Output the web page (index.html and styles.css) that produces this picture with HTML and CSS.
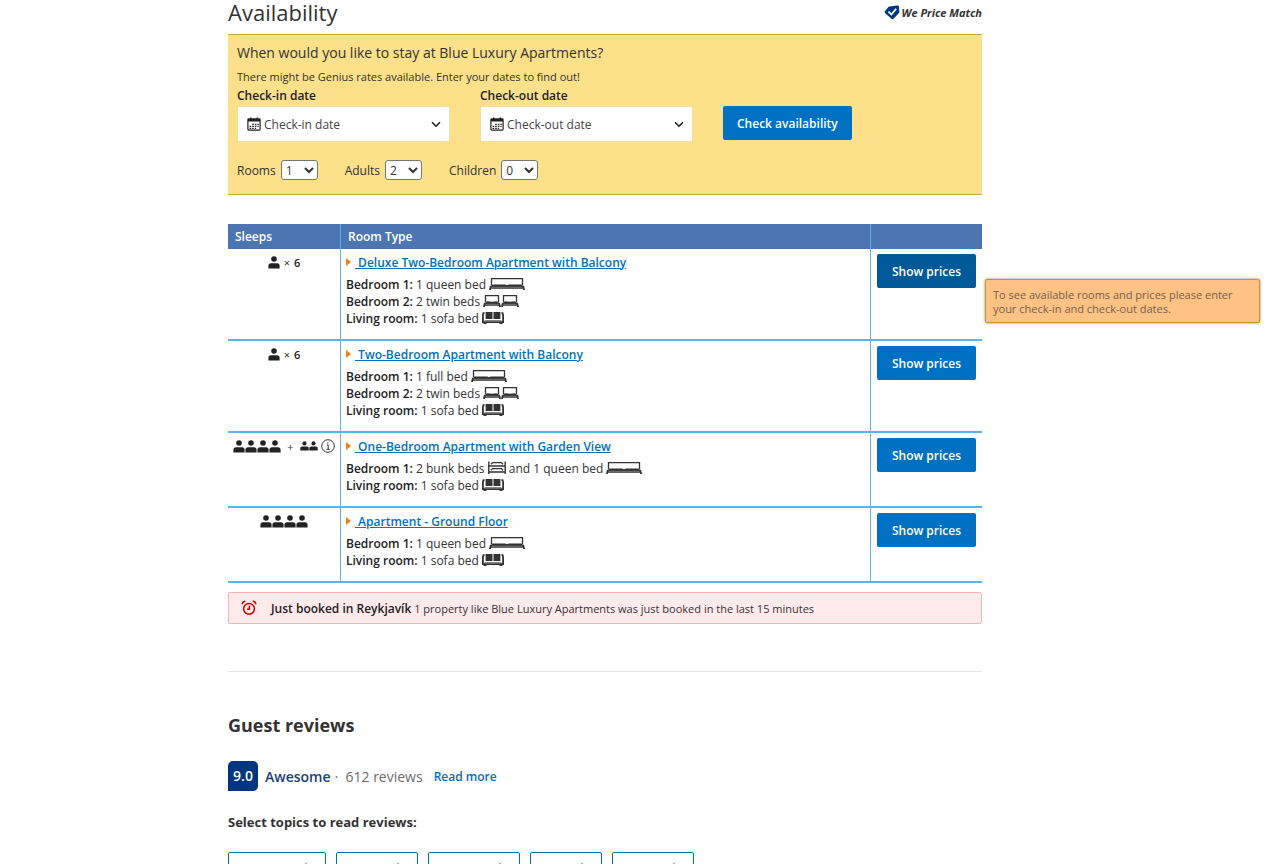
FILE: index.html
```
<!DOCTYPE html>
<html lang="en">
    <head>
        <meta charset="UTF-8" />
        <meta name="viewport" content="width=device-width, initial-scale=1.0" />
        <title>Blue Luxury Apartments - Availability</title>
        <link rel="stylesheet" href="styles.css">
    </head>
    <body>
        <!-- icon sprites -->
        <svg class="sprites" aria-hidden="true">
            <symbol id="person" viewBox="0 0 12 13">
                <circle cx="6" cy="3" r="2.8" />
                <path d="M0.4 12.6V9.8c0-1.7 1-2.6 2.6-2.6h6c1.6 0 2.6.9 2.6 2.6v2.8z" />
            </symbol>
            <symbol id="bed-large" viewBox="0 0 36 12">
                <path d="M2.5 7V0.7h31V7" fill="none" stroke="currentColor" stroke-width="1.3" />
                <path d="M2 8l1.5-1.4h12.8l1.7 0.6 1.7-0.6h12.8L34 8z" />
                <path d="M1 7.8h34l1 4.2h-2v-1.2H2V12H0z" />
                <path d="M2.5 9.3h31" stroke="#8a8a8a" stroke-width="0.8" />
            </symbol>
            <symbol id="bed-single" viewBox="0 0 18 12">
                <path d="M2.5 7V0.7h13V7" fill="none" stroke="currentColor" stroke-width="1.3" />
                <path d="M2 8l2-1.8c3 0.6 7 0.6 10 0L16 8z" />
                <path d="M1 7.8h16l1 4.2h-2v-1.2H2V12H0z" />
                <path d="M2.5 9.3h13" stroke="#8a8a8a" stroke-width="0.8" />
            </symbol>
            <symbol id="bed-sofa" viewBox="0 0 22 12">
                <path d="M3.6 0h6.9v7H3.6zM11.5 0h6.9v7h-6.9z" />
                <path d="M2.6 1.2H1.4L0.9 3v7.2h20.2V3l-0.5-1.8h-1.2" fill="none" stroke="currentColor" stroke-width="1.8" />
                <path d="M2.6 8.6h16.8" stroke="#777" stroke-width="1" />
                <path d="M1.5 10.4h3V12h-3zM17.5 10.4h3V12h-3z" />
            </symbol>
            <symbol id="bed-bunk" viewBox="0 0 18 13">
                <path d="M0.8 0.5V13M17.2 0.5V13" stroke="currentColor" stroke-width="1.4" />
                <path d="M1 5h16M1 11h16" stroke="currentColor" stroke-width="1.5" />
                <path d="M3 3.2l1.6-1.6h8.8L15 3.2M3 9.2l1.6-1.6h8.8L15 9.2" fill="none" stroke="currentColor" stroke-width="1.3" />
            </symbol>
            <symbol id="calendar" viewBox="0 0 14 14">
                <rect x="0.9" y="1.9" width="12.2" height="11.2" rx="0.8" fill="none" stroke="currentColor" stroke-width="1.2" />
                <path d="M1 2h12v2.6H1zM3 0.4h1.4V2H3zM9.6 0.4H11V2H9.6z" />
                <path d="M5.2 7.4h6.6M2.6 9.4h9M2.6 11.3h6.5" fill="none" stroke="currentColor" stroke-width="1.2" stroke-dasharray="1.6 1" />
            </symbol>
            <symbol id="chevron" viewBox="0 0 10 7">
                <path d="M1 1.2l4 4 4-4" fill="none" stroke="currentColor" stroke-width="1.6" />
            </symbol>
        </svg>

        <div class="page">
            <div class="title_row">
                <h2>Availability</h2>
                <a class="price_match" href="#">
                    <svg width="16" height="15" viewBox="0 0 16 15">
                        <path d="M5.4 1.4l8-.9c.8-.1 1.4.4 1.5 1.1l.4 5.2c0 .5-.1.8-.4 1.2l-5.4 5.8c-.6.6-1.4.6-2 0L1.2 8.2c-.7-.7-.7-1.4-.1-2.1l3.3-4.2c.3-.3.6-.5 1-.5z" fill="#003580" />
                        <path d="M4.4 6.6l3 2.8 4.8-5.6" fill="none" stroke="#fff" stroke-width="1.7" />
                    </svg>
                    We Price Match
                </a>
            </div>

            <form class="search_box">
                <p class="question">When would you like to stay at Blue Luxury Apartments?</p>
                <p class="genius">There might be Genius rates available. Enter your dates to find out!</p>
                <div class="date_row">
                    <div class="date_field">
                        <label for="checkin">Check-in date</label>
                        <button type="button" id="checkin" class="date_btn">
                            <svg width="14" height="14"><use href="#calendar" /></svg>
                            <span>Check-in date</span>
                            <svg width="10" height="7"><use href="#chevron" /></svg>
                        </button>
                    </div>
                    <div class="date_field">
                        <label for="checkout">Check-out date</label>
                        <button type="button" id="checkout" class="date_btn">
                            <svg width="14" height="14"><use href="#calendar" /></svg>
                            <span>Check-out date</span>
                            <svg width="10" height="7"><use href="#chevron" /></svg>
                        </button>
                    </div>
                    <button type="submit" class="btn">Check availability</button>
                </div>
                <div class="group_row">
                    <div>
                        <label for="rooms">Rooms</label>
                        <select id="rooms"><option>1</option></select>
                    </div>
                    <div>
                        <label for="adults">Adults</label>
                        <select id="adults"><option>2</option></select>
                    </div>
                    <div>
                        <label for="children">Children</label>
                        <select id="children"><option>0</option></select>
                    </div>
                </div>
            </form>

            <table class="rooms">
                <thead>
                    <tr>
                        <th class="col_sleeps">Sleeps</th>
                        <th>Room Type</th>
                        <th class="col_price"></th>
                    </tr>
                </thead>
                <tbody>
                    <tr>
                        <td>
                            <div class="sleeps">
                                <svg width="12" height="13"><use href="#person" /></svg>
                                <span class="times">×</span>
                                <b>6</b>
                            </div>
                        </td>
                        <td>
                            <div class="room_name"><a href="#">&nbsp;Deluxe Two-Bedroom Apartment with Balcony</a></div>
                            <ul class="beds">
                                <li><b>Bedroom 1:</b> 1 queen bed <svg width="36" height="12"><use href="#bed-large" /></svg></li>
                                <li><b>Bedroom 2:</b> 2 twin beds <svg width="18" height="12"><use href="#bed-single" /></svg><svg width="18" height="12"><use href="#bed-single" /></svg></li>
                                <li><b>Living room:</b> 1 sofa bed <svg width="22" height="12"><use href="#bed-sofa" /></svg></li>
                            </ul>
                        </td>
                        <td>
                            <div class="price_cell">
                                <button type="button" class="btn active">Show prices</button>
                                <div class="tooltip" role="tooltip">To see available rooms and prices please enter your check-in and check-out dates.</div>
                            </div>
                        </td>
                    </tr>
                    <tr>
                        <td>
                            <div class="sleeps">
                                <svg width="12" height="13"><use href="#person" /></svg>
                                <span class="times">×</span>
                                <b>6</b>
                            </div>
                        </td>
                        <td>
                            <div class="room_name"><a href="#">&nbsp;Two-Bedroom Apartment with Balcony</a></div>
                            <ul class="beds">
                                <li><b>Bedroom 1:</b> 1 full bed <svg width="36" height="12"><use href="#bed-large" /></svg></li>
                                <li><b>Bedroom 2:</b> 2 twin beds <svg width="18" height="12"><use href="#bed-single" /></svg><svg width="18" height="12"><use href="#bed-single" /></svg></li>
                                <li><b>Living room:</b> 1 sofa bed <svg width="22" height="12"><use href="#bed-sofa" /></svg></li>
                            </ul>
                        </td>
                        <td>
                            <div class="price_cell">
                                <button type="button" class="btn">Show prices</button>
                            </div>
                        </td>
                    </tr>
                    <tr>
                        <td>
                            <div class="sleeps">
                                <svg width="12" height="13"><use href="#person" /></svg>
                                <svg width="12" height="13"><use href="#person" /></svg>
                                <svg width="12" height="13"><use href="#person" /></svg>
                                <svg width="12" height="13"><use href="#person" /></svg>
                                <span class="plus">+</span>
                                <svg class="child" width="9" height="10"><use href="#person" /></svg>
                                <svg class="child" width="9" height="10"><use href="#person" /></svg>
                                <svg class="info" width="14" height="14" viewBox="0 0 14 14">
                                    <circle cx="7" cy="7" r="6.3" fill="none" stroke="currentColor" />
                                    <path d="M6 6h1.2v4.2M5.6 10.4h3M6.8 3.4v1.3" fill="none" stroke="currentColor" />
                                </svg>
                            </div>
                        </td>
                        <td>
                            <div class="room_name"><a href="#">&nbsp;One-Bedroom Apartment with Garden View</a></div>
                            <ul class="beds">
                                <li><b>Bedroom 1:</b> 2 bunk beds <svg width="18" height="13"><use href="#bed-bunk" /></svg> and 1 queen bed <svg width="36" height="12"><use href="#bed-large" /></svg></li>
                                <li><b>Living room:</b> 1 sofa bed <svg width="22" height="12"><use href="#bed-sofa" /></svg></li>
                            </ul>
                        </td>
                        <td>
                            <div class="price_cell">
                                <button type="button" class="btn">Show prices</button>
                            </div>
                        </td>
                    </tr>
                    <tr>
                        <td>
                            <div class="sleeps">
                                <svg width="12" height="13"><use href="#person" /></svg>
                                <svg width="12" height="13"><use href="#person" /></svg>
                                <svg width="12" height="13"><use href="#person" /></svg>
                                <svg width="12" height="13"><use href="#person" /></svg>
                            </div>
                        </td>
                        <td>
                            <div class="room_name"><a href="#">&nbsp;Apartment - Ground Floor</a></div>
                            <ul class="beds">
                                <li><b>Bedroom 1:</b> 1 queen bed <svg width="36" height="12"><use href="#bed-large" /></svg></li>
                                <li><b>Living room:</b> 1 sofa bed <svg width="22" height="12"><use href="#bed-sofa" /></svg></li>
                            </ul>
                        </td>
                        <td>
                            <div class="price_cell">
                                <button type="button" class="btn">Show prices</button>
                            </div>
                        </td>
                    </tr>
                </tbody>
            </table>

            <div class="just_booked">
                <svg width="16" height="16" viewBox="0 0 16 16" fill="none" stroke="#c00" stroke-width="1.5">
                    <circle cx="8" cy="8.8" r="5.4" />
                    <path d="M8.4 5.6v3.6H6M1 4.2C1.4 2.6 2.6 1.4 4.2 1M15 4.2C14.6 2.6 13.4 1.4 11.8 1" />
                </svg>
                <p><b>Just booked in Reykjavík</b> 1 property like Blue Luxury Apartments was just booked in the last 15 minutes</p>
            </div>

            <hr>

            <h3>Guest reviews</h3>
            <div class="score_row">
                <span class="score">9.0</span>
                <span class="score_word">Awesome</span>
                <span class="score_count">· &nbsp;612 reviews</span>
                <a href="#">Read more</a>
            </div>
            <h4>Select topics to read reviews:</h4>
            <div class="topics">
                <button type="button" class="topic topic_xl" aria-label="Add topic"><svg width="12" height="12" viewBox="0 0 12 12"><path d="M6 0v12M0 6h12" stroke="currentColor" /></svg></button>
                <button type="button" class="topic topic_m" aria-label="Add topic"><svg width="12" height="12" viewBox="0 0 12 12"><path d="M6 0v12M0 6h12" stroke="currentColor" /></svg></button>
                <button type="button" class="topic topic_l" aria-label="Add topic"><svg width="12" height="12" viewBox="0 0 12 12"><path d="M6 0v12M0 6h12" stroke="currentColor" /></svg></button>
                <button type="button" class="topic topic_s" aria-label="Add topic"><svg width="12" height="12" viewBox="0 0 12 12"><path d="M6 0v12M0 6h12" stroke="currentColor" /></svg></button>
                <button type="button" class="topic topic_m" aria-label="Add topic"><svg width="12" height="12" viewBox="0 0 12 12"><path d="M6 0v12M0 6h12" stroke="currentColor" /></svg></button>
            </div>
        </div>
    </body>
</html>
```

FILE: styles.css
```
* {
    box-sizing: border-box;
}

body {
    margin: 0;
    font-family: "Open Sans", "Noto Sans", sans-serif;
    font-size: 12px;
    line-height: 17px;
    background: #fff;
    color: #333;
}

h2, h3, h4, p, ul {
    margin: 0;
    padding: 0;
}

a {
    color: #0071c2;
    text-decoration: none;
}

b {
    font-weight: 600;
    color: #222;
}

button, select {
    font-family: inherit;
}

.sprites {
    display: none;
}

/* room on the right is kept for the tooltip */
.page {
    padding: 0 298px 0 228px;
}

.title_row {
    display: flex;
    justify-content: space-between;
    height: 34px;
}

h2 {
    font-size: 22px;
    font-weight: 500;
    line-height: 24px;
}

.price_match {
    display: flex;
    align-items: center;
    gap: 2px;
    height: 24px;
    color: #333;
    font-size: 11px;
    font-style: italic;
    font-weight: 700;
}

/* search box */
.search_box {
    padding: 7px 9px 14px;
    background: #fce08a;
    border-top: 1px solid #c9a73c;
    border-bottom: 1px solid #c9a73c;
}

.question {
    font-size: 14px;
    line-height: 22px;
}

.genius {
    margin-top: 4px;
    font-size: 11px;
}

.date_row {
    display: flex;
    align-items: flex-end;
    gap: 30px;
    margin-top: 2px;
}

.date_row .btn {
    margin-bottom: 2px;
}

.date_field label {
    display: block;
    margin-bottom: 1px;
    font-weight: 600;
    line-height: 18px;
    color: #222;
}

.date_btn {
    display: flex;
    align-items: center;
    gap: 3px;
    width: 213px;
    height: 36px;
    padding: 0 8px 0 9px;
    background: #fff;
    border: 1px solid #f1dfa6;
    border-radius: 2px;
    font-size: 12px;
    color: #444;
    cursor: pointer;
}

.date_btn span {
    flex: 1;
    text-align: left;
}

.date_btn svg {
    color: #222;
    fill: currentColor;
}

.btn {
    height: 34px;
    padding: 0 14px;
    background: #0071c2;
    border: none;
    border-radius: 2px;
    color: #fff;
    font-size: 12px;
    font-weight: 600;
    white-space: nowrap;
    cursor: pointer;
}

.btn.active {
    background: #005999;
}

.group_row {
    display: flex;
    gap: 27px;
    margin-top: 18px;
}

.group_row div {
    display: flex;
    align-items: center;
    gap: 5px;
}

.group_row select {
    width: 37px;
    height: 20px;
    background: #fff;
    border: 1px solid #767676;
    border-radius: 3px;
    font-size: 12px;
    color: #333;
}

/* rooms table */
.rooms {
    width: 100%;
    margin-top: 29px;
    border-collapse: separate;
    border-spacing: 0;
    table-layout: fixed;
}

.rooms th {
    height: 25px;
    padding: 0 7px;
    background: #4c76b2;
    color: #fff;
    font-size: 12px;
    font-weight: 600;
    text-align: left;
}

.rooms td {
    padding: 4px 5px 12px;
    border-bottom: 2px solid #5bb4e5;
    vertical-align: top;
}

.rooms th + th,
.rooms td + td {
    border-left: 1px solid #5bb4e5;
}

.col_sleeps,
.col_price {
    width: 112px;
}

.sleeps {
    display: flex;
    justify-content: center;
    align-items: center;
    height: 18px;
    font-size: 11px;
}

.sleeps svg {
    flex: none;
    fill: #222;
}

.sleeps .times {
    margin: 0 4px;
}

.sleeps .plus {
    margin: 0 6px;
}

.sleeps .info {
    margin-left: 3px;
}

.room_name {
    display: flex;
    align-items: center;
    gap: 4px;
    height: 18px;
    font-size: 12px;
    font-weight: 600;
}

.room_name::before {
    content: "";
    border: 4px solid transparent;
    border-left: 5px solid #f07c1a;
    border-right: none;
}

.room_name a {
    text-decoration: underline;
}

.beds {
    margin-top: 5px;
    list-style: none;
}

.beds li {
    height: 17px;
}

.beds svg {
    fill: #333;
    vertical-align: -1px;
}

.price_cell {
    position: relative;
    padding: 1px 1px 0;
}

.price_cell .btn {
    width: 100%;
    padding: 0;
}

.tooltip {
    position: absolute;
    top: 26px;
    left: 109px;
    width: 275px;
    padding: 8px 7px 6px;
    background: #ffc285;
    border: 1px solid #c9932e;
    border-radius: 2px;
    box-shadow: 0 0 3px #888;
    color: #76604c;
    font-size: 11px;
    line-height: 14px;
}

.just_booked {
    display: flex;
    align-items: center;
    gap: 14px;
    height: 32px;
    margin-top: 9px;
    padding: 0 12px;
    background: #ffebeb;
    border: 1px solid #f5b5b5;
    border-radius: 2px;
    font-size: 11px;
}

.just_booked b {
    font-size: 12px;
}

hr {
    height: 1px;
    margin: 47px 0 0;
    background: #e6e6e6;
    border: none;
}

/* reviews */
h3 {
    margin-top: 39px;
    font-size: 18px;
    font-weight: 700;
    line-height: 28px;
}

.score_row {
    display: flex;
    align-items: center;
    margin-top: 22px;
    font-size: 14px;
    font-weight: 500;
}

.score {
    width: 30px;
    margin-right: 7px;
    background: #003580;
    border-radius: 5px 5px 5px 0;
    color: #fff;
    font-weight: 600;
    line-height: 30px;
    text-align: center;
}

.score_word {
    margin-right: 4px;
    color: #1a3f7c;
    font-weight: 600;
}

.score_count {
    margin-right: 11px;
    color: #6b6b6b;
}

.score_row a {
    font-size: 12px;
    font-weight: 600;
}

h4 {
    margin-top: 21px;
    font-size: 13px;
    font-weight: 700;
    line-height: 20px;
}

.topics {
    display: flex;
    gap: 10px;
    height: 12px;
    margin-top: 20px;
    overflow: hidden;
}

.topic {
    display: flex;
    flex: none;
    justify-content: flex-end;
    align-items: center;
    height: 34px;
    padding: 0 13px;
    background: #fff;
    border: 1px solid #0071a8;
    border-radius: 2px;
    color: #0071c2;
}

.topic_s {
    width: 72px;
}

.topic_m {
    width: 82px;
}

.topic_l {
    width: 92px;
}

.topic_xl {
    width: 98px;
}
```
